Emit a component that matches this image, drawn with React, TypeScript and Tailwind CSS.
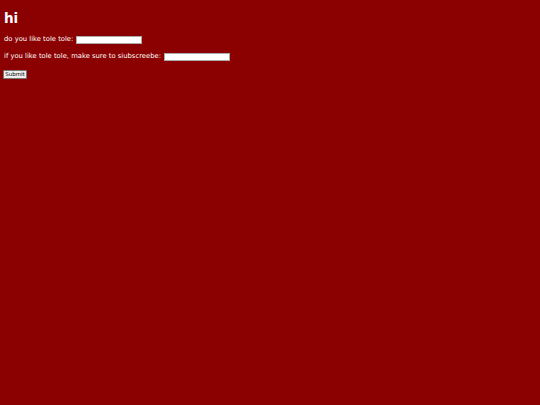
import React from 'react'

export default function App() {
  return (
    <div className="min-h-[405px] w-full bg-[#8b0000] px-[4px] pt-[10px] text-white font-['DejaVu_Sans',Verdana,sans-serif]">
      <h1 className="text-[13.5px] font-bold leading-[16px]">hi</h1>
      <form className="mt-[9px] text-[6.8px] leading-[9px]" onSubmit={(e) => e.preventDefault()}>
        <div className="flex items-center gap-[3px]">
          <label htmlFor="q1">do you like tole tole:</label>
          <input id="q1" type="text" className="h-[8px] w-[66px] bg-white border border-[#aaa] text-black" />
        </div>
        <div className="mt-[8px] flex items-center gap-[3px]">
          <label htmlFor="q2">if you like tole tole, make sure to siubscreebe:</label>
          <input id="q2" type="text" className="h-[8px] w-[66px] bg-white border border-[#aaa] text-black" />
        </div>
        <button
          type="submit"
          className="mt-[9px] h-[9px] w-[24px] -ml-[1px] bg-[#efefef] border border-[#767676] rounded-[1px] text-black text-[5.5px] leading-[7px]"
        >
          Submit
        </button>
      </form>
    </div>
  )
}
